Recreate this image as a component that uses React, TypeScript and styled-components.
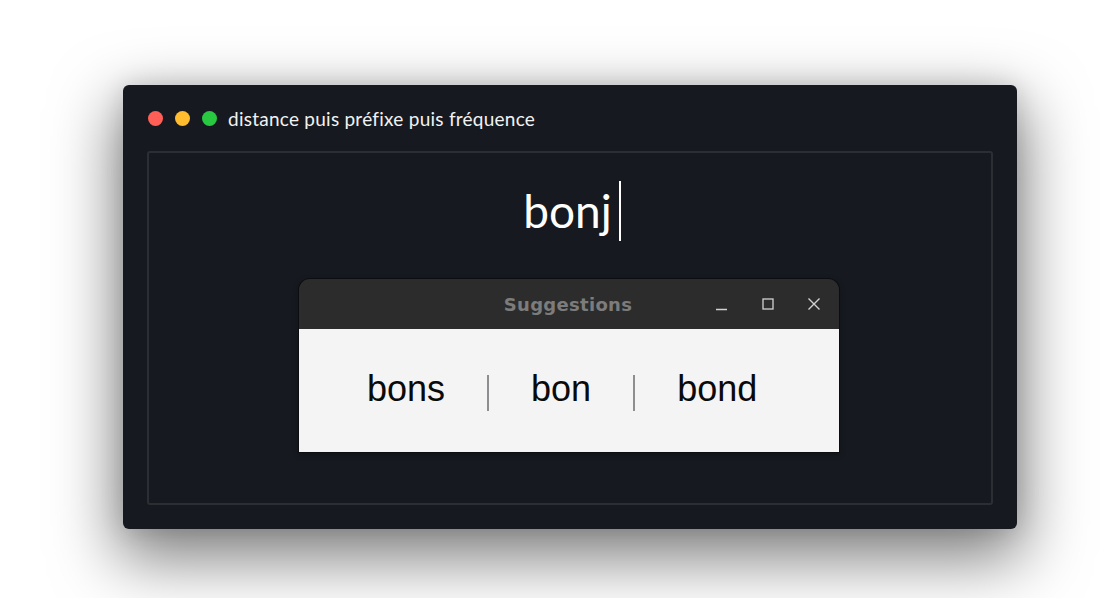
import React from 'react';
import styled, { createGlobalStyle } from 'styled-components';

const GlobalStyle = createGlobalStyle`
  html, body {
    margin: 0;
    padding: 0;
    background: #ffffff;
  }
  body {
    font-family: Lato, "Noto Sans", sans-serif;
  }
`;

const Page = styled.div`
  width: 1110px;
  height: 598px;
  padding: 85px 0 0 123px;
  box-sizing: border-box;
  overflow: hidden;
`;

const Window = styled.div`
  width: 894px;
  height: 444px;
  background: #161a20;
  border-radius: 6px;
  box-shadow: 0 24px 64px 6px rgba(0, 0, 0, 0.5), 0 0 24px rgba(0, 0, 0, 0.12);
  display: flex;
  flex-direction: column;
  padding: 0 24px 24px;
  box-sizing: border-box;
`;

const TitleBar = styled.div`
  height: 66px;
  display: flex;
  align-items: center;
  gap: 12px;
  padding-left: 1px;
`;

const Light = styled.span<{ $color: string }>`
  width: 15px;
  height: 15px;
  border-radius: 50%;
  background: ${p => p.$color};
`;

const Title = styled.span`
  margin-left: -1px;
  color: #f2f2f2;
  font-family: Lato, sans-serif;
  font-size: 19px;
  letter-spacing: 0.25px;
`;

const Frame = styled.div`
  flex: 1;
  border: 2px solid #2b2f34;
  border-radius: 3px;
  display: flex;
  flex-direction: column;
  align-items: center;
  padding-top: 28px;
`;

const InputRow = styled.div`
  display: flex;
  align-items: center;
  height: 60px;
  margin-left: 4px;
`;

const Typed = styled.span`
  color: #ffffff;
  font-family: Lato, sans-serif;
  font-size: 46px;
  line-height: 60px;
`;

const Caret = styled.span`
  width: 2px;
  height: 60px;
  margin-left: 7px;
  background: #ffffff;
`;

const Popup = styled.div`
  margin-top: 38px;
  margin-right: 2px;
  width: 540px;
  border-radius: 11px 11px 0 0;
  overflow: hidden;
  box-shadow: 0 0 0 1px #0b0d10, 0 2px 6px rgba(0, 0, 0, 0.4);
`;

const PopupHeader = styled.div`
  height: 50px;
  background: #2c2c2c;
  display: flex;
  align-items: center;
  justify-content: center;
  position: relative;
`;

const PopupTitle = styled.span`
  color: #7c7c7c;
  font-family: "DejaVu Sans", sans-serif;
  font-weight: bold;
  font-size: 18px;
  letter-spacing: 0.3px;
  margin-right: 2px;
`;

const Controls = styled.div`
  position: absolute;
  right: 13px;
  top: 0;
  height: 50px;
  display: flex;
  align-items: center;
  gap: 22px;
`;

const CtrlBtn = styled.span`
  width: 24px;
  height: 24px;
  display: flex;
  align-items: center;
  justify-content: center;
`;

const PopupBody = styled.div`
  height: 123px;
  background: #f4f4f4;
  display: flex;
  align-items: center;
  gap: 42px;
  padding-left: 68px;
`;

const Word = styled.span`
  color: #0a0a0a;
  font-family: "Liberation Sans", Arial, sans-serif;
  font-size: 36px;
  line-height: 40px;
  margin-top: -4px;
`;

const Sep = styled.span`
  width: 2px;
  height: 36px;
  margin-top: 4px;
  background: #8e8e90;
`;

const words = ['bons', 'bon', 'bond'];

export default function App() {
  return (
    <>
      <GlobalStyle />
      <Page>
        <Window>
          <TitleBar>
            <Light $color="#ff5f57" />
            <Light $color="#febc2e" />
            <Light $color="#28c840" />
            <Title>distance puis préfixe puis fréquence</Title>
          </TitleBar>
          <Frame>
            <InputRow>
              <Typed>bonj</Typed>
              <Caret />
            </InputRow>
            <Popup>
              <PopupHeader>
                <PopupTitle>Suggestions</PopupTitle>
                <Controls>
                  <CtrlBtn>
                    <svg width="14" height="14" viewBox="0 0 14 14">
                      <path d="M1 12.5h11" stroke="#d2d2d2" strokeWidth="1.3" />
                    </svg>
                  </CtrlBtn>
                  <CtrlBtn>
                    <svg width="14" height="14" viewBox="0 0 14 14">
                      <rect x="2" y="2" width="10" height="10" fill="none" stroke="#d2d2d2" strokeWidth="1.3" />
                    </svg>
                  </CtrlBtn>
                  <CtrlBtn>
                    <svg width="14" height="14" viewBox="0 0 14 14">
                      <path d="M1.5 1.5l11 11M12.5 1.5l-11 11" stroke="#d2d2d2" strokeWidth="1.4" />
                    </svg>
                  </CtrlBtn>
                </Controls>
              </PopupHeader>
              <PopupBody>
                {words.map((w, i) => (
                  <React.Fragment key={w}>
                    {i > 0 && <Sep />}
                    <Word>{w}</Word>
                  </React.Fragment>
                ))}
              </PopupBody>
            </Popup>
          </Frame>
        </Window>
      </Page>
    </>
  );
}
